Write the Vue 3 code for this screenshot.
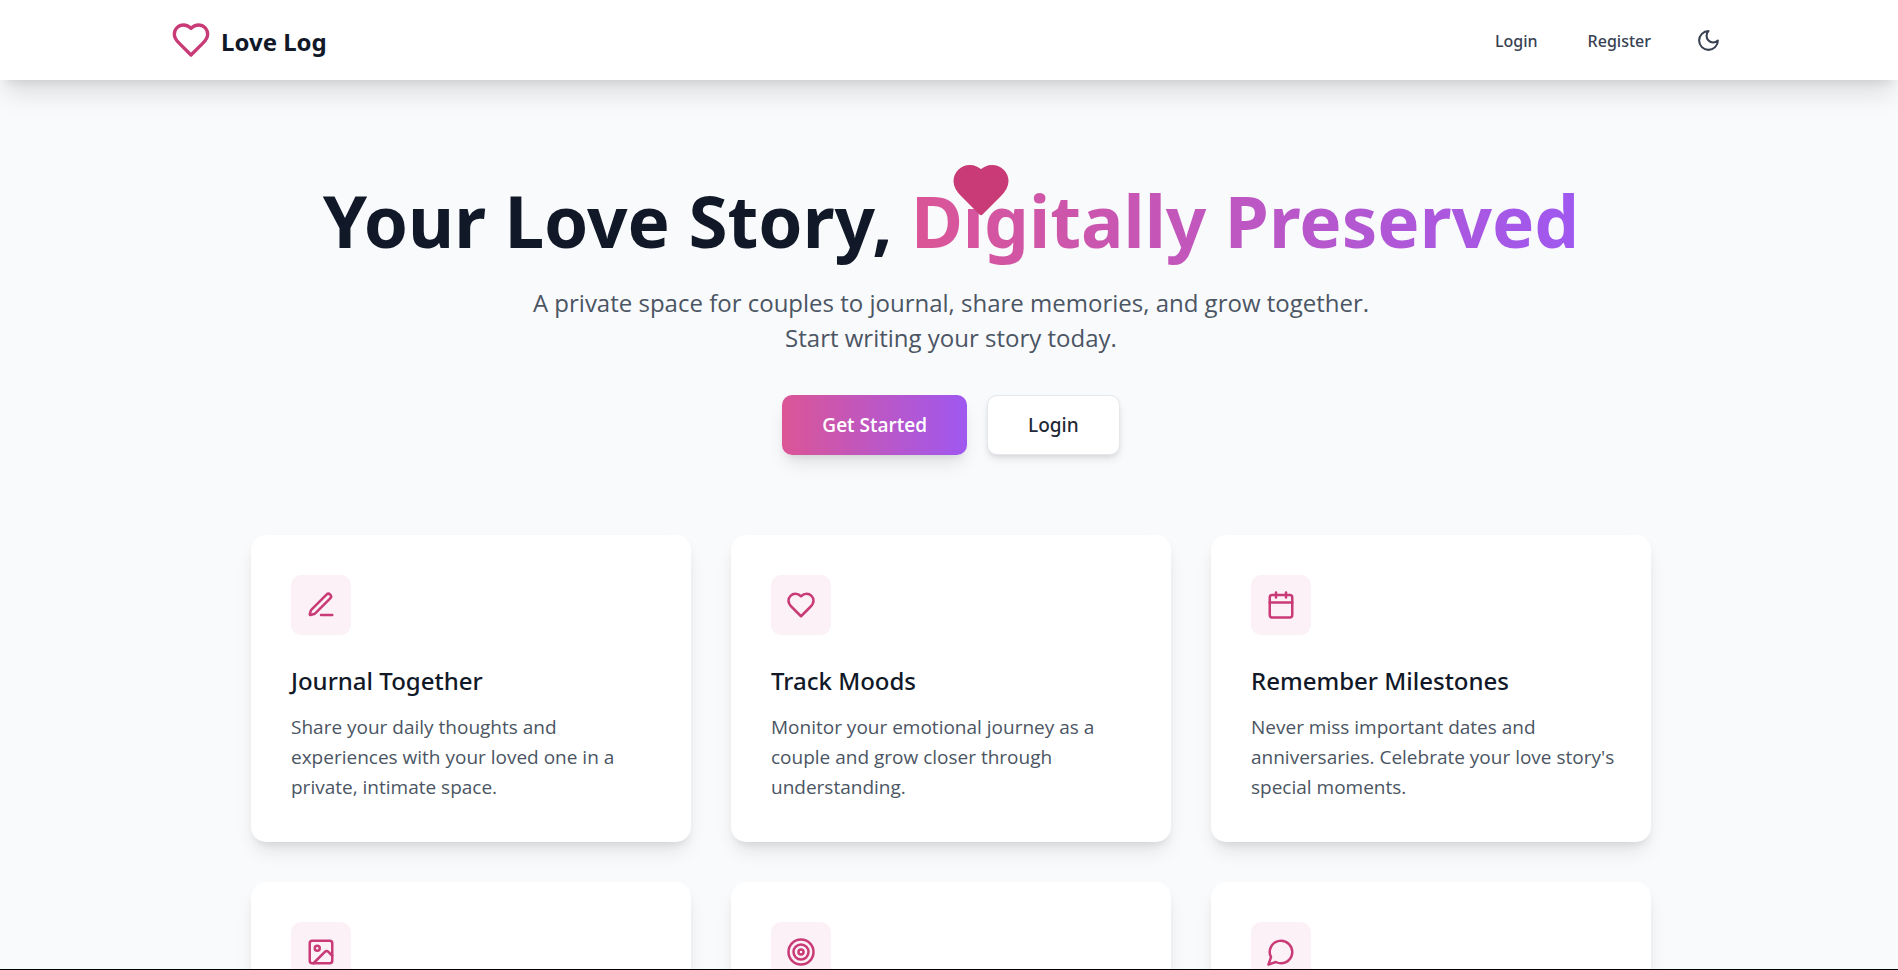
<script setup>
const icons = {
  pen: '<path d="M12 20h9"/><path d="M16.376 3.622a1 1 0 0 1 3.002 3.002L7.368 18.635a2 2 0 0 1-.855.506l-2.872.838a.5.5 0 0 1-.62-.62l.838-2.872a2 2 0 0 1 .506-.854z"/>',
  heart: '<path d="M19 14c1.49-1.46 3-3.21 3-5.5A5.5 5.5 0 0 0 16.5 3c-1.76 0-3 .5-4.5 2-1.5-1.5-2.74-2-4.5-2A5.5 5.5 0 0 0 2 8.5c0 2.3 1.5 4.05 3 5.5l7 7Z"/>',
  calendar: '<path d="M8 2v4"/><path d="M16 2v4"/><rect width="18" height="18" x="3" y="4" rx="2"/><path d="M3 10h18"/>',
  image: '<rect width="18" height="18" x="3" y="3" rx="2"/><circle cx="9" cy="9" r="2"/><path d="m21 15-3.086-3.086a2 2 0 0 0-2.828 0L6 21"/>',
  target: '<circle cx="12" cy="12" r="10"/><circle cx="12" cy="12" r="6"/><circle cx="12" cy="12" r="2"/>',
  message: '<path d="M7.9 20A9 9 0 1 0 4 16.1L2 22Z"/>',
  moon: '<path d="M12 3a6 6 0 0 0 9 9 9 9 0 1 1-9-9Z"/>',
}

const features = [
  { icon: 'pen', title: 'Journal Together', text: 'Share your daily thoughts and experiences with your loved one in a private, intimate space.' },
  { icon: 'heart', title: 'Track Moods', text: 'Monitor your emotional journey as a couple and grow closer through understanding.' },
  { icon: 'calendar', title: 'Remember Milestones', text: "Never miss important dates and anniversaries. Celebrate your love story's special moments." },
  { icon: 'image' },
  { icon: 'target' },
  { icon: 'message' },
]
</script>

<template>
  <div class="page">
    <header class="header">
      <nav class="nav">
        <a class="brand" href="#">
          <svg class="icon brand-icon" viewBox="0 0 24 24" aria-hidden="true" v-html="icons.heart"></svg>
          <span class="brand-name">Love Log</span>
        </a>
        <div class="nav-links">
          <a class="nav-link" href="#login">Login</a>
          <a class="nav-link" href="#register">Register</a>
          <button class="theme" type="button" aria-label="Toggle dark mode">
            <svg class="icon" viewBox="0 0 24 24" aria-hidden="true" v-html="icons.moon"></svg>
          </button>
        </div>
      </nav>
    </header>

    <main class="main">
      <section class="hero">
        <svg class="icon hero-heart" viewBox="0 0 24 24" aria-hidden="true" v-html="icons.heart"></svg>
        <h1>Your Love Story, <span class="gradient-text">Digitally Preserved</span></h1>
        <p class="lead">A private space for couples to journal, share memories, and grow together. Start writing your story today.</p>
        <div class="actions">
          <a class="btn btn-primary" href="#register">Get Started</a>
          <a class="btn btn-plain" href="#login">Login</a>
        </div>
      </section>

      <section class="features">
        <article v-for="f in features" :key="f.icon" class="card">
          <div class="card-icon">
            <svg class="icon" viewBox="0 0 24 24" aria-hidden="true" v-html="icons[f.icon]"></svg>
          </div>
          <template v-if="f.title">
            <h2>{{ f.title }}</h2>
            <p>{{ f.text }}</p>
          </template>
        </article>
      </section>
    </main>
  </div>
</template>

<style>
body {
  margin: 0;
  background: #f9fafb;
}
</style>

<style scoped>
.page {
  box-sizing: border-box;
  height: 100vh;
  overflow: hidden;
  border-bottom: 1px solid #000;
  background: #f9fafc;
  color: #111827;
  font-family: "Noto Sans", "Open Sans", sans-serif;
}
.icon {
  display: block;
  fill: none;
  stroke: currentColor;
  stroke-width: 2;
  stroke-linecap: round;
  stroke-linejoin: round;
}
a {
  color: inherit;
  text-decoration: none;
}
.header {
  position: relative;
  background: #fff;
  padding-left: 4px;
  box-shadow: 0 20px 25px -5px rgba(0, 0, 0, 0.1), 0 8px 10px -6px rgba(0, 0, 0, 0.1);
}
.nav {
  box-sizing: border-box;
  max-width: 1600px;
  height: 80px;
  margin: 0 auto;
  padding: 0 20px;
  display: flex;
  align-items: center;
  justify-content: space-between;
}
.brand {
  display: flex;
  align-items: center;
  gap: 10px;
  font-size: 24px;
  line-height: 35px;
  font-weight: 700;
}
.brand-name {
  padding-top: 2px;
}
.brand-icon {
  width: 40px;
  height: 40px;
  color: #c93b76;
}
.nav-links {
  display: flex;
  align-items: center;
  gap: 20px;
  color: #374151;
}
.nav-link {
  padding: 12px 15px 10px;
  font-size: 16px;
  line-height: 25px;
  font-weight: 500;
}
.theme {
  padding: 10px;
  border: 0;
  background: none;
  color: inherit;
}
.theme .icon {
  width: 25px;
  height: 25px;
}
.main {
  max-width: 1400px;
  margin: 0 auto;
  padding: 100px 0 0 4px;
}
.hero {
  position: relative;
  text-align: center;
}
.hero-heart {
  position: absolute;
  top: -20px;
  left: 50%;
  width: 60px;
  height: 60px;
  color: #c93b76;
  fill: currentColor;
}
h1 {
  margin: 0 0 27px;
  padding-top: 3px;
  font-size: 71px;
  line-height: 75px;
  font-weight: 700;
}
.gradient-text {
  background: linear-gradient(90deg, #db5596, #9f58f0);
  background-clip: text;
  -webkit-background-clip: text;
  color: transparent;
}
.lead {
  max-width: 860px;
  margin: 0 auto 40px;
  color: #4b5563;
  font-family: "Open Sans", "Noto Sans", sans-serif;
  font-size: 24px;
  line-height: 35px;
}
.actions {
  display: flex;
  justify-content: center;
  align-items: flex-start;
  gap: 20px;
}
.btn {
  padding: 15px 40px;
  border-radius: 10px;
  font-size: 19px;
  line-height: 30px;
  font-weight: 600;
}
.btn-primary {
  background: linear-gradient(90deg, #db5596, #9f58f0);
  color: #fff;
  font-family: "Open Sans", "Noto Sans", sans-serif;
  box-shadow: 0 12px 19px -4px rgba(0, 0, 0, 0.1), 0 5px 8px -4px rgba(0, 0, 0, 0.1);
}
.btn-plain {
  border: 1px solid #e5e7eb;
  padding: 14px 40px;
  background: #fff;
  color: #1f2937;
  font-weight: 500;
  box-shadow: 0 5px 8px -1px rgba(0, 0, 0, 0.1), 0 2px 5px -2px rgba(0, 0, 0, 0.1);
}
.features {
  display: grid;
  grid-template-columns: repeat(3, 1fr);
  gap: 40px;
  margin-top: 80px;
}
.card {
  padding: 40px 30px 40px 40px;
  border-radius: 15px;
  background: #fff;
  box-shadow: 0 12px 19px -4px rgba(0, 0, 0, 0.1), 0 5px 8px -4px rgba(0, 0, 0, 0.1);
}
.card-icon {
  display: grid;
  place-items: center;
  width: 60px;
  height: 60px;
  margin-bottom: 28px;
  border-radius: 10px;
  background: #fbf1f6;
  color: #c93b76;
}
.card-icon .icon {
  width: 30px;
  height: 30px;
}
h2 {
  margin: 0 0 14px;
  font-size: 24px;
  line-height: 35px;
  font-weight: 500;
}
.card p {
  margin: 0;
  color: #4b5563;
  font-family: "Open Sans", "Noto Sans", sans-serif;
  font-size: 19px;
  line-height: 30px;
}
</style>
